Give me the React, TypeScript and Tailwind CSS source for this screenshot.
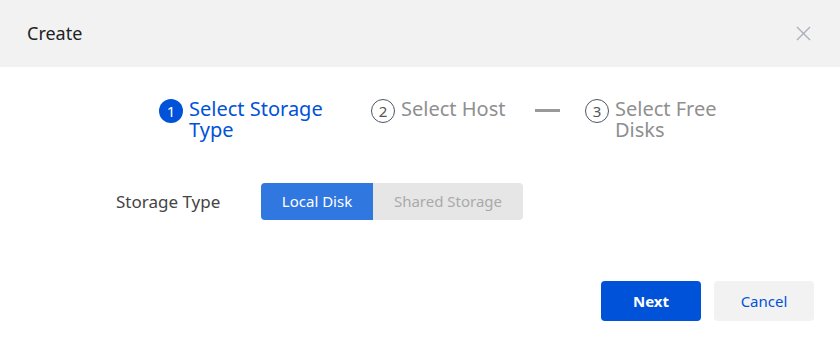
import React from 'react';

const font = { fontFamily: '"Noto Sans", "Open Sans", sans-serif' };

const Step: React.FC<{ n: number; label: string; active?: boolean; textW: string }> = ({ n, label, active, textW }) => (
  <div className="flex items-start gap-[6px]">
    <div
      className={`mt-[1px] flex h-[24px] w-[24px] shrink-0 items-center justify-center rounded-full text-[15px] leading-none ${
        active ? 'bg-[#0052d9] text-white' : 'border border-[#4b5563] text-[#555]'
      }`}
    >
      {n}
    </div>
    <div className={`${textW} text-[20px] leading-[21px] ${active ? 'text-[#0052d9]' : 'text-[#8f8f8f]'}`}>
      {label}
    </div>
  </div>
);

export default function App() {
  return (
    <div className="h-[350px] w-[840px] bg-white" style={font}>
      <div className="flex h-[67px] items-center justify-between bg-[#f2f2f2] pl-[27px] pr-[29px]">
        <span className="text-[18px] text-[#222]">Create</span>
        <svg width="15" height="15" viewBox="0 0 15 15" className="text-[#a9b0bb]">
          <path d="M1 1L14 14M14 1L1 14" stroke="currentColor" strokeWidth="1.4" />
        </svg>
      </div>

      <div className="flex items-start pl-[159px] pt-[31px]">
        <Step n={1} label="Select Storage Type" active textW="w-[150px]" />
        <div className="ml-[32px]">
          <Step n={2} label="Select Host" textW="w-[110px]" />
        </div>
        <div className="ml-[24px] mt-[11px] h-[3px] w-[25px] bg-[#999]" />
        <div className="ml-[25px]">
          <Step n={3} label="Select Free Disks" textW="w-[110px]" />
        </div>
      </div>

      <div className="mt-[43px] flex items-center pl-[116px]">
        <span className="w-[145px] text-[17px] text-[#444]">Storage Type</span>
        <div className="flex h-[37px] overflow-hidden rounded-[4px] text-[15px]">
          <div className="flex w-[112px] items-center justify-center bg-[#3077e0] text-white">Local Disk</div>
          <div className="flex w-[150px] items-center justify-center bg-[#e6e6e6] text-[#aaa]">Shared Storage</div>
        </div>
      </div>

      <div className="mt-[61px] flex justify-end gap-[13px] pr-[26px]">
        <button className="h-[40px] w-[100px] rounded-[4px] bg-[#0052d9] text-[15px] font-bold text-white">Next</button>
        <button className="h-[40px] w-[100px] rounded-[4px] bg-[#f2f2f2] text-[15px] text-[#0052d9]">Cancel</button>
      </div>
    </div>
  );
}
